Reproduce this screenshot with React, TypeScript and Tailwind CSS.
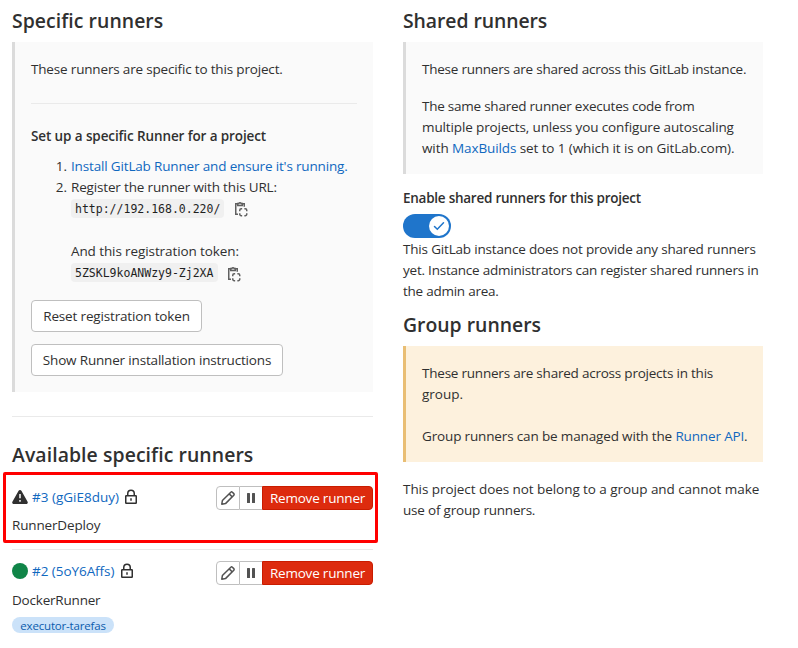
import type { ReactNode } from "react";

function Line({ children, className = "" }: { children: ReactNode; className?: string }) {
  return <span className={`block h-[21px] whitespace-nowrap ${className}`}>{children}</span>;
}

function Link({ children }: { children: ReactNode }) {
  return (
    <a href="#" className="text-[#1068bf]">
      {children}
    </a>
  );
}

function Heading({ children, className = "" }: { children: ReactNode; className?: string }) {
  return (
    <h4 className={`h-6 whitespace-nowrap text-[19.4px] leading-6 font-semibold text-[#303030] ${className}`}>
      {children}
    </h4>
  );
}

function CopyIcon({ className = "" }: { className?: string }) {
  return (
    <svg viewBox="0 0 16 16" className={`h-4 w-4 ${className}`} fill="none" stroke="#606060" strokeWidth="1.5">
      <path d="M5 13.25H2.750V2.750H5M9.500 2.750h1.750v3" />
      <path d="M4.750 4.500V2.500h1.100a1.200 1.200 0 0 1 2.300 0h1.100v2z" />
      <path d="M6.750 10.200V9.250a1.500 1.500 0 0 1 1.500-1.500h.9M11.350 7.750h.9a1.500 1.500 0 0 1 1.500 1.500v.95M13.750 12.300v.95a1.500 1.500 0 0 1-1.500 1.500h-.9M9.150 14.750h-.9a1.500 1.500 0 0 1-1.500-1.500v-.95" />
    </svg>
  );
}

function LockIcon() {
  return (
    <svg viewBox="0 0 16 16" className="h-4 w-4" fill="none" stroke="#303030" strokeWidth="1.5">
      <rect x="2.75" y="6.75" width="10.5" height="7.5" rx="0.5" />
      <path d="M4.750 6.750V4.500a3.250 3.250 0 0 1 6.500 0v2.250" />
      <path d="M8 9.250v2.500" />
    </svg>
  );
}

function WarningIcon() {
  return (
    <svg viewBox="0 0 16 16" className="h-4 w-4">
      <path
        d="M8 1c.6 0 1.1.3 1.4.8l6.2 10.9c.6 1-.1 2.3-1.3 2.3H1.7C.5 15-.2 13.7.4 12.7L6.600 1.800C6.900 1.300 7.400 1 8 1z"
        fill="#303030"
      />
      <path d="M8 5v4.200M8 11v1.700" stroke="#fff" strokeWidth="1.500" />
    </svg>
  );
}

function PencilIcon() {
  return (
    <svg viewBox="0 0 16 16" className="h-4 w-4" fill="none" stroke="#525252" strokeWidth="1.5">
      <path d="M1.800 14.200l.6-3.700 8.400-8.300a1.100 1.100 0 0 1 1.600 0l1.400 1.400a1.100 1.100 0 0 1 0 1.600l-8.300 8.400z" strokeLinejoin="round" />
      <path d="M9.200 3.900l2.900 2.900" />
    </svg>
  );
}

function PauseIcon() {
  return (
    <svg viewBox="0 0 16 16" className="h-4 w-4" fill="#525252">
      <rect x="4" y="3" width="3" height="10" rx="0.500" />
      <rect x="9" y="3" width="3" height="10" rx="0.500" />
    </svg>
  );
}

function Actions() {
  return (
    <div className="flex h-6 w-[157px]">
      <button className="flex w-6 items-center justify-center rounded-l-[4px] border border-[#bfbfbf] bg-white">
        <PencilIcon />
      </button>
      <button className="flex w-[22px] items-center justify-center border-y border-[#bfbfbf] bg-white">
        <PauseIcon />
      </button>
      <button className="flex-1 rounded-r-[4px] border border-[#c91c00] bg-[#dd2b0e] text-center leading-[22px] tracking-[-0.2px] whitespace-nowrap text-white">
        Remove runner
      </button>
    </div>
  );
}

function Code({ children, className }: { children: ReactNode; className: string }) {
  return (
    <code
      className={`block h-[19px] rounded-[4px] bg-[#f0f0f0] px-1 font-['DejaVu_Sans_Mono',monospace] text-[11.5px] leading-[20px] whitespace-nowrap text-[#1f1f1f] ${className}`}
    >
      {children}
    </code>
  );
}

export default function App() {
  return (
    <main className="relative flex h-[648px] w-[798px] gap-[30px] overflow-hidden bg-white pl-3 font-['Open_Sans','Noto_Sans',sans-serif] text-[13.5px] leading-[21px] text-[#303030]">
      <section className="w-[361px]">
        <Heading className="mt-[9px] tracking-[0.06px]">Specific runners</Heading>
        <div className="mt-[9px] h-[350px] border-l-[3px] border-[#dbdbdb] bg-[#fafafa] pt-[17px] pr-4 pl-4">
          <Line className="tracking-[-0.17px]">These runners are specific to this project.</Line>
          <hr className="mt-[23px] border-[#eaeaea]" />
          <Line className="mt-[22px] font-semibold tracking-[-0.11px]">Set up a specific Runner for a project</Line>
          <ol className="mt-[9px]">
            <li className="flex">
              <span className="w-10 pr-1 text-right">1.</span>
              <Line className="tracking-[-0.16px]">
                <Link>Install GitLab Runner and ensure it's running.</Link>
              </Line>
            </li>
            <li className="flex">
              <span className="w-10 pr-1 text-right">2.</span>
              <div>
                <Line className="tracking-[-0.16px]">Register the runner with this URL:</Line>
                <div className="mt-px flex h-[19px] items-center gap-[9px]">
                  <Code className="w-[153px]">http://192.168.0.220/</Code>
                  <CopyIcon className="mt-px" />
                </div>
                <Line className="mt-[23px] tracking-[-0.1px]">And this registration token:</Line>
                <div className="mt-px flex h-[19px] items-center gap-2">
                  <Code className="w-[147px]">5ZSKL9koANWzy9-Zj2XA</Code>
                  <CopyIcon className="mt-[3px]" />
                </div>
              </div>
            </li>
          </ol>
          <button className="mt-[18px] block h-8 w-[171px] rounded-[4px] border border-[#bfbfbf] bg-white text-center tracking-[-0.16px] whitespace-nowrap">
            Reset registration token
          </button>
          <button className="mt-3 block h-8 w-[252px] rounded-[4px] border border-[#bfbfbf] bg-white text-center tracking-[-0.17px] whitespace-nowrap">
            Show Runner installation instructions
          </button>
        </div>
        <hr className="mt-6 border-[#eaeaea]" />
        <Heading className="mt-[26px] tracking-[0.08px]">Available specific runners</Heading>
        <ul>
          <li className="h-[83px] border-b border-[#eaeaea] pt-[19px]">
            <div className="flex h-6 justify-between">
              <div className="flex h-[22px] items-center gap-1">
                <WarningIcon />
                <Line>
                  <Link>#3 (gGiE8duy)</Link>
                </Line>
                <LockIcon />
              </div>
              <Actions />
            </div>
            <Line className="mt-[5px] tracking-[-0.15px]">RunnerDeploy</Line>
          </li>
          <li className="pt-[11px]">
            <div className="flex h-6 justify-between">
              <div className="flex h-5 items-center gap-1">
                <span className="h-4 w-4 rounded-full bg-[#108548]" />
                <Line className="w-[83px] tracking-[-0.05px]">
                  <Link>#2 (5oY6Affs)</Link>
                </Line>
                <LockIcon />
              </div>
              <Actions />
            </div>
            <Line className="mt-[5px] tracking-[-0.2px]">DockerRunner</Line>
            <span className="mt-[6px] block h-4 w-[102px] rounded-full bg-[#cbe2f9] text-center text-[11.5px] leading-[17px] tracking-[-0.18px] text-[#0b5cad]">
              executor-tarefas
            </span>
          </li>
        </ul>
      </section>
      <section className="w-[360px]">
        <Heading className="mt-[9px] tracking-[-0.07px]">Shared runners</Heading>
        <div className="mt-[9px] h-[132px] border-l-[3px] border-[#dbdbdb] bg-[#fafafa] pt-[17px] pl-4">
          <Line className="tracking-[-0.23px]">These runners are shared across this GitLab instance.</Line>
          <p className="mt-4">
            <Line className="tracking-[-0.24px]">The same shared runner executes code from</Line>
            <Line className="tracking-[-0.12px]">multiple projects, unless you configure autoscaling</Line>
            <Line className="tracking-[-0.1px]">
              with <Link>MaxBuilds</Link> set to 1 (which it is on GitLab.com).
            </Line>
          </p>
        </div>
        <Line className="mt-[14px] font-semibold tracking-[-0.25px]">Enable shared runners for this project</Line>
        <button className="mt-[5px] flex h-6 w-12 items-center justify-end rounded-full bg-[#1f75cb] pr-0.5">
          <span className="flex h-5 w-5 items-center justify-center rounded-full bg-white">
            <svg viewBox="0 0 16 16" className="h-4 w-4" fill="none" stroke="#1f75cb" strokeWidth="1.5">
              <path d="M3.500 8.500l2.800 2.800 6.200-6.500" strokeLinecap="round" />
            </svg>
          </span>
        </button>
        <p className="mt-px">
          <Line className="tracking-[-0.18px]">This GitLab instance does not provide any shared runners</Line>
          <Line className="tracking-[-0.22px]">yet. Instance administrators can register shared runners in</Line>
          <Line className="tracking-[-0.25px]">the admin area.</Line>
        </p>
        <Heading className="mt-[11px]">Group runners</Heading>
        <div className="mt-[9px] h-[116px] border-l-[3px] border-[#e9be74] bg-[#fdf1dd] pt-[17px] pl-4">
          <Line className="tracking-[-0.22px]">These runners are shared across projects in this</Line>
          <Line>group.</Line>
          <Line className="mt-[21px] tracking-[-0.15px]">
            Group runners can be managed with the <Link>Runner API</Link>.
          </Line>
        </div>
        <p className="mt-[17px]">
          <Line className="tracking-[-0.06px]">This project does not belong to a group and cannot make</Line>
          <Line className="tracking-[-0.2px]">use of group runners.</Line>
        </p>
      </section>
      <div className="pointer-events-none absolute top-[472px] left-[3px] h-[71px] w-[375px] rounded-[2px] border-[3px] border-[#ff0000]" />
    </main>
  );
}
